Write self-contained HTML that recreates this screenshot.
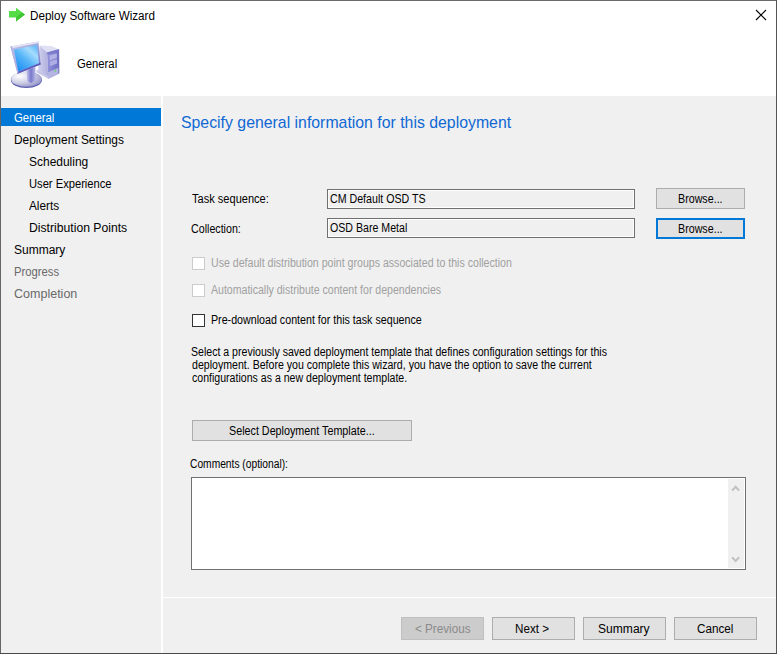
<!DOCTYPE html>
<html><head><meta charset="utf-8"><title>Deploy Software Wizard</title>
<style>
html,body{margin:0;padding:0;}
body{width:777px;height:654px;overflow:hidden;background:#f0f0f0;font-family:"Liberation Sans",sans-serif;position:relative;}
.abs{position:absolute;}
.t{position:absolute;white-space:nowrap;line-height:1;transform-origin:0 0;display:block;}
.btn{position:absolute;box-sizing:border-box;background:#e1e1e1;border:1px solid #adadad;}
.tb{position:absolute;box-sizing:border-box;background:#f0f0f0;border:1px solid #707070;box-shadow:inset 0 0 0 1px #fff;}
.cb{position:absolute;box-sizing:border-box;width:13px;height:13px;background:#fff;border:1px solid #333;}
.cb.dis{border-color:#cccccc;}
</style></head><body>
<div class="abs" id="hdr" style="left:0;top:0;width:777px;height:96px;background:#fff;"></div>
<div class="abs" id="side" style="left:0;top:96px;width:161px;height:558px;background:#f0f0f0;"></div>
<div class="abs" id="vsep" style="left:161px;top:96px;width:2px;height:558px;background:#fff;"></div>
<div class="abs" id="sel" style="left:1px;top:108px;width:160px;height:18px;background:#0078d7;"></div>
<div class="abs" id="hsep" style="left:163px;top:597px;width:614px;height:1px;background:#fff;"></div>
<svg class="abs" style="left:0;top:0;" width="80" height="96" viewBox="0 0 80 96">
<defs>
<linearGradient id="gscr" x1="0.1" y1="0.9" x2="0.8" y2="0.05"><stop offset="0" stop-color="#1f8ff2"/><stop offset="0.45" stop-color="#55b4f8"/><stop offset="0.8" stop-color="#a6dcfd"/><stop offset="1" stop-color="#6cc0fa"/></linearGradient>
<linearGradient id="gfrm" x1="0" y1="0" x2="1" y2="1"><stop offset="0" stop-color="#c8c8ea"/><stop offset="0.5" stop-color="#a4a4dc"/><stop offset="1" stop-color="#6c6cc4"/></linearGradient>
<radialGradient id="gbase" cx="0.28" cy="0.3" r="0.85"><stop offset="0" stop-color="#ffffff"/><stop offset="0.5" stop-color="#d0d0e6"/><stop offset="1" stop-color="#8c8cc6"/></radialGradient>
<linearGradient id="gfront" x1="0" y1="0" x2="1" y2="0"><stop offset="0" stop-color="#9494da"/><stop offset="1" stop-color="#6c6cc4"/></linearGradient>
<linearGradient id="gside" x1="0" y1="0" x2="1" y2="0"><stop offset="0" stop-color="#d2d2ee"/><stop offset="1" stop-color="#aeaede"/></linearGradient>
<linearGradient id="gneck" x1="0" y1="0" x2="1" y2="0"><stop offset="0" stop-color="#c4c4ec"/><stop offset="0.5" stop-color="#7878cc"/><stop offset="1" stop-color="#b8b8e8"/></linearGradient>
</defs>
<!-- green arrow -->
<polygon points="9,11 16,11 16,7.8 25,14.5 16,21.4 16,17.6 9,17.6" fill="#54dc46"/>
<polygon points="16.6,17 22,12.4 25,14.5 16,21.4 16,17.6" fill="#3fc632"/>
<!-- tower -->
<polygon points="39.6,45.6 51.4,46 58.6,49.2 47.1,52.6" fill="#e0e0f4"/>
<polygon points="39.6,45.6 47.1,52.6 48.4,78.6 38,72" fill="url(#gside)"/>
<polygon points="47.1,52.6 58.6,49.2 58.9,73.6 48.4,78.6" fill="url(#gfront)"/>
<polygon points="49.5,55.5 56.8,53.3 56.9,58 49.7,60.4" fill="#b2b2e6"/>
<polygon points="49.8,61.4 56.9,59 57,63.6 50,66.2" fill="#aeaee4"/>
<polygon points="36.4,69.5 47.6,76 58.9,70.2 58.9,73.8 48.4,78.8 36.6,72.4" fill="#c6c6e8"/>
<polygon points="47.8,72.5 58.9,67.5 58.9,73.8 48.4,78.8" fill="#b4b4e2"/>
<path d="M58.7 49.4 L58.9 73.6" stroke="#5a5ab6" stroke-width="0.8" fill="none"/>
<polygon points="47.1,52.6 58.6,49.2 58.65,51 47.2,54.6" fill="#7a7acc"/>
<circle cx="55.3" cy="70.8" r="1" fill="#6fd06f"/>
<!-- base -->
<ellipse cx="26.4" cy="79.9" rx="15.6" ry="8.1" fill="#5c5cb0"/>
<ellipse cx="26.4" cy="79.2" rx="15.2" ry="7.6" fill="url(#gbase)"/>
<!-- neck -->
<polygon points="26.5,70 35.4,67 35.6,80.5 31,83 27.4,81.6" fill="url(#gneck)"/>
<!-- monitor frame -->
<polygon points="10.4,46.6 38.4,41.4 40.6,64.6 17.6,73.8" fill="url(#gfrm)"/>
<polygon points="10.4,46.6 38.4,41.4 38.8,43 11.6,48.2" fill="#e4e4f4"/>
<polygon points="17.6,73.8 40.6,64.6 40.3,62.6 17.2,71.9" fill="#5c5cbc"/>
<polygon points="10.4,46.6 12.2,46.3 18.6,72.6 17.6,73.8" fill="#b4b4e2"/>
<!-- screen -->
<polygon points="14,49.6 37.1,45 39,63.2 18.3,71.6" fill="url(#gscr)"/>
</svg>
<svg class="abs" style="left:755px;top:9px;" width="12" height="12" viewBox="0 0 12 12"><path d="M1 1 L11 11 M11 1 L1 11" stroke="#000" stroke-width="1.1" fill="none"/></svg>

<div class="tb" style="left:327px;top:189px;width:308px;height:20px;"></div>
<div class="tb" style="left:327px;top:218px;width:308px;height:20px;"></div>
<div class="btn" style="left:656px;top:188px;width:89px;height:21px;"></div>
<div class="btn" style="left:656px;top:218px;width:89px;height:21px;border:2px solid #0078d7;"></div>
<div class="cb dis" style="left:192px;top:257px;"></div>
<div class="cb dis" style="left:192px;top:284px;"></div>
<div class="cb" style="left:192px;top:314px;"></div>
<div class="btn" style="left:192px;top:420px;width:220px;height:21px;"></div>
<div class="tb" style="left:191px;top:477px;width:555px;height:93px;background:#fff;"></div>
<div class="abs" style="left:728px;top:479px;width:16px;height:89px;background:#f0f0f0;"></div>
<svg class="abs" style="left:728px;top:479px;" width="16" height="89" viewBox="0 0 16 89"><path d="M4.1 11.6 L7.6 7.8 L11.1 11.6" fill="none" stroke="#c0c0c0" stroke-width="2"/><path d="M4.1 78.3 L7.6 82.1 L11.1 78.3" fill="none" stroke="#c0c0c0" stroke-width="2"/></svg>
<div class="btn" style="left:401px;top:617px;width:83px;height:23px;background:#cccccc;border-color:#bfbfbf;"></div>
<div class="btn" style="left:492px;top:617px;width:83px;height:23px;"></div>
<div class="btn" style="left:583px;top:617px;width:83px;height:23px;"></div>
<div class="btn" style="left:674px;top:617px;width:83px;height:23px;"></div>
<span class="t" id="t_title" style="left:29.99px;top:10.04px;font-size:12px;color:#000;transform:scaleX(0.9705);">Deploy Software Wizard</span>
<span class="t" id="t_hgen" style="left:76.58px;top:58.14px;font-size:12px;color:#000;transform:scaleX(0.9406);">General</span>
<span class="t" id="s0" style="left:14.22px;top:112.14px;font-size:12px;color:#fff;transform:scaleX(0.9454);">General</span>
<span class="t" id="s1" style="left:13.71px;top:134.14px;font-size:12px;color:#000;transform:scaleX(0.9928);">Deployment Settings</span>
<span class="t" id="s2" style="left:29.20px;top:156.14px;font-size:12px;color:#000;transform:scaleX(0.9979);">Scheduling</span>
<span class="t" id="s3" style="left:28.57px;top:178.14px;font-size:12px;color:#000;transform:scaleX(0.9306);">User Experience</span>
<span class="t" id="s4" style="left:28.79px;top:200.14px;font-size:12px;color:#000;transform:scaleX(0.9836);">Alerts</span>
<span class="t" id="s5" style="left:29.24px;top:222.14px;font-size:12px;color:#000;transform:scaleX(1.0153);">Distribution Points</span>
<span class="t" id="s6" style="left:13.68px;top:244.14px;font-size:12px;color:#000;transform:scaleX(1.0005);">Summary</span>
<span class="t" id="s7" style="left:14.18px;top:266.14px;font-size:12px;color:#696969;transform:scaleX(0.9394);">Progress</span>
<span class="t" id="s8" style="left:13.72px;top:288.14px;font-size:12px;color:#696969;transform:scaleX(1.0430);">Completion</span>
<span class="t" id="t_head" style="left:180.95px;top:113.61px;font-size:17px;color:#0f68d4;transform:scaleX(0.9316);">Specify general information for this deployment</span>
<span class="t" id="l_ts" style="left:191.91px;top:193.34px;font-size:12px;color:#000;transform:scaleX(0.9214);">Task sequence:</span>
<span class="t" id="l_col" style="left:191.23px;top:222.74px;font-size:12px;color:#000;transform:scaleX(0.8894);">Collection:</span>
<span class="t" id="v_ts" style="left:329.84px;top:193.04px;font-size:12px;color:#000;transform:scaleX(0.8865);">CM Default OSD TS</span>
<span class="t" id="v_col" style="left:329.85px;top:222.04px;font-size:12px;color:#000;transform:scaleX(0.8847);">OSD Bare Metal</span>
<span class="t" id="b1" style="left:677.81px;top:193.34px;font-size:12px;color:#000;transform:scaleX(0.8911);">Browse...</span>
<span class="t" id="b2" style="left:677.81px;top:222.74px;font-size:12px;color:#000;transform:scaleX(0.8911);">Browse...</span>
<span class="t" id="c1" style="left:211.28px;top:256.84px;font-size:12px;color:#a0a0a0;transform:scaleX(0.8826);">Use default distribution point groups associated to this collection</span>
<span class="t" id="c2" style="left:210.78px;top:284.04px;font-size:12px;color:#a0a0a0;transform:scaleX(0.8799);">Automatically distribute content for dependencies</span>
<span class="t" id="c3" style="left:210.79px;top:314.04px;font-size:12px;color:#000;transform:scaleX(0.8899);">Pre-download content for this task sequence</span>
<span class="t" id="p1" style="left:191.21px;top:346.34px;font-size:12px;color:#000;transform:scaleX(0.8807);">Select a previously saved deployment template that defines configuration settings for this</span>
<span class="t" id="p2" style="left:192.39px;top:359.24px;font-size:12px;color:#000;transform:scaleX(0.8826);">deployment. Before you complete this wizard, you have the option to save the current</span>
<span class="t" id="p3" style="left:192.39px;top:372.14px;font-size:12px;color:#000;transform:scaleX(0.8812);">configurations as a new deployment template.</span>
<span class="t" id="b_sel" style="left:228.84px;top:424.84px;font-size:12px;color:#000;transform:scaleX(0.8960);">Select Deployment Template...</span>
<span class="t" id="l_com" style="left:190.06px;top:457.54px;font-size:12px;color:#000;transform:scaleX(0.8536);">Comments (optional):</span>
<span class="t" id="b_prev" style="left:415.00px;top:623.14px;font-size:12px;color:#8a8a8a;transform:scaleX(0.9725);">&lt; Previous</span>
<span class="t" id="b_next" style="left:514.82px;top:623.14px;font-size:12px;color:#000;transform:scaleX(0.9698);">Next &gt;</span>
<span class="t" id="b_sum" style="left:597.67px;top:623.14px;font-size:12px;color:#000;transform:scaleX(1.0062);">Summary</span>
<span class="t" id="b_can" style="left:696.82px;top:623.14px;font-size:12px;color:#000;transform:scaleX(0.9743);">Cancel</span>
<div class="abs" style="left:0;top:0;width:777px;height:1px;background:#6a6a6a;"></div>
<div class="abs" style="left:0;top:0;width:1px;height:654px;background:#666;"></div>
<div class="abs" style="left:776px;top:0;width:1px;height:654px;background:#555;"></div>
<div class="abs" style="left:0;top:653px;width:777px;height:1px;background:#4a4a4a;"></div>
</body></html>
